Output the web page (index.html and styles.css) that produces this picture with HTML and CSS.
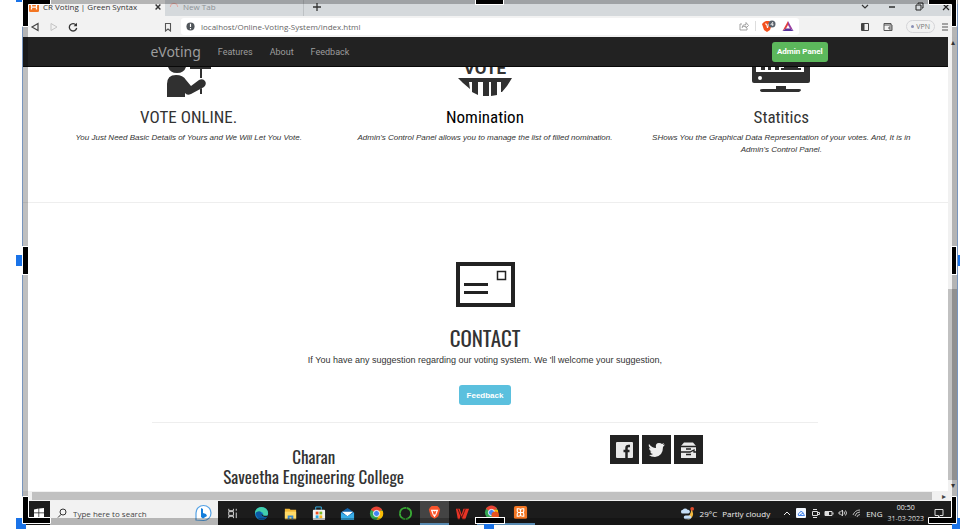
FILE: index.html
```html
<!DOCTYPE html>
<html lang="en">
<head>
<meta charset="utf-8">
<meta name="viewport" content="width=device-width, initial-scale=1">
<title>CR Voting | Green Syntax</title>
<link rel="stylesheet" href="styles.css">
</head>
<body>
<div class="screen">
  <div class="tabs">
    <div class="tab tab-active">
      <svg class="favicon" viewBox="0 0 16 16"><rect width="16" height="16" rx="2" fill="#f37623"/><path d="M4 4v3q0 1 2 1h4q2 0 2-1V4M4 12V9q0-1 2-1h4q2 0 2 1v3" fill="none" stroke="#fff" stroke-width="2"/></svg>
      <span>CR Voting | Green Syntax</span>
      <button class="icon-btn tab-close" aria-label="Close tab"><svg viewBox="0 0 10 10"><path d="M2 2l6 6M8 2L2 8" stroke="#333" stroke-width="1.8"/></svg></button>
    </div>
    <div class="tab tab-idle">
      <svg class="favicon" viewBox="0 0 16 16"><path d="M2 8a6 6 0 0 1 12 0" fill="none" stroke="#e8a39b" stroke-width="1.5"/></svg>
      <span>New Tab</span>
    </div>
    <button class="icon-btn tab-new" aria-label="New tab"><svg viewBox="0 0 10 10"><path d="M5 1v8M1 5h8" stroke="#333" stroke-width="1.3"/></svg></button>
    <div class="window-btns">
      <button class="icon-btn" aria-label="Search tabs"><svg viewBox="0 0 10 10"><path d="M2 4l3 3 3-3" fill="none" stroke="#333" stroke-width="1.2"/></svg></button>
      <button class="icon-btn" aria-label="Minimize"><svg viewBox="0 0 10 10"><path d="M2 6h6" stroke="#222" stroke-width="1.4"/></svg></button>
      <button class="icon-btn" aria-label="Restore"><svg viewBox="0 0 10 10"><path d="M2 4h5v5H2zM4 3V2h5v5H8" fill="none" stroke="#222"/></svg></button>
      <button class="icon-btn" aria-label="Close"><svg viewBox="0 0 10 10"><path d="M2 3l6 6M8 3L2 9" stroke="#222" stroke-width="1.2"/></svg></button>
    </div>
  </div>

  <div class="toolbar">
    <div class="history">
      <button class="icon-btn" aria-label="Back"><svg viewBox="0 0 10 10"><path d="M8 1.500L2 5l6 3.500z" fill="none" stroke="#444" stroke-width="1.200"/></svg></button>
      <button class="icon-btn" aria-label="Forward"><svg viewBox="0 0 10 10"><path d="M2 1.500L8 5 2 8.500z" fill="none" stroke="#c4c4c4"/></svg></button>
      <button class="icon-btn" aria-label="Reload"><svg viewBox="0 0 10 10"><path d="M8 3A3.700 3.700 0 1 0 8.700 6" fill="none" stroke="#333" stroke-width="1.300"/><path d="M9 .8v3.400H5.600z" fill="#333"/></svg></button>
    </div>
    <button class="icon-btn bookmark" aria-label="Bookmark"><svg viewBox="0 0 10 10"><path d="M2.500 1.500h5V9L5 7 2.500 9z" fill="none" stroke="#555" stroke-width="1.100"/></svg></button>
    <div class="address">
      <svg class="info" viewBox="0 0 10 10"><circle cx="5" cy="5" r="4.500" fill="#50555a"/><path d="M5 2v3.500M5 6.700V8" stroke="#fff" stroke-width="1.300"/></svg>
      <input type="text" value="localhost/Online-Voting-System/index.html" aria-label="Address">
      <button class="icon-btn" aria-label="Share"><svg viewBox="0 0 10 10"><path d="M3 3H1v6h7V7M3 6.500q0-3 4-3V1.500l2.500 3L7 7V5.200q-3 0-4 1.300z" fill="none" stroke="#999" stroke-width=".9"/></svg></button>
      <span class="divider"></span>
      <button class="icon-btn shield" aria-label="Shields"><svg viewBox="0 0 14 12"><path d="M2 2l2-1h3l2 1 1 2-2 6-3 2-3-2-2-6z" fill="#f4511e"/><path d="M3 4h1.500l1 4 1-4H8" fill="none" stroke="#fff"/><circle cx="10" cy="4" r="3.500" fill="#59616b"/><path d="M10.700 6V2.200L8.800 4.700h2.700" fill="none" stroke="#fff" stroke-width=".7"/></svg></button>
      <button class="icon-btn rewards" aria-label="Rewards"><svg viewBox="0 0 12 12"><path d="M6 1L.5 11 4 8.500 6 5z" fill="#e14040"/><path d="M6 1l5.500 10L8 8.500 6 5z" fill="#9b3fa0"/><path d="M.5 11L4 8.500h4l3.500 2.500z" fill="#57329b"/></svg></button>
    </div>
    <div class="tools">
      <button class="icon-btn" aria-label="Sidebar"><svg viewBox="0 0 10 10"><path d="M1.500 1.500h7v7h-7z" fill="none" stroke="#444"/><path d="M2 2h2.500v6H2z" fill="#444"/></svg></button>
      <button class="icon-btn" aria-label="Wallet"><svg viewBox="0 0 10 10"><path d="M8 3V1.500H1V8.500h8V3H1M9 5H6v2h3" fill="none" stroke="#555"/></svg></button>
      <button class="vpn"><i></i>VPN</button>
      <button class="icon-btn" aria-label="Menu"><svg viewBox="0 0 10 10"><path d="M2 2h6M2 5h6M2 8h6" stroke="#555" stroke-width="1.200"/></svg></button>
    </div>
  </div>

  <div class="viewport">
    <div class="page">
      <nav class="navbar">
        <div class="container nav-inner">
          <a class="brand" href="#">eVoting</a>
          <a href="#features">Features</a>
          <a href="#about">About</a>
          <a href="#feedback">Feedback</a>
          <button class="btn btn-admin">Admin Panel</button>
        </div>
      </nav>

      <section class="features" id="features">
        <article>
          <svg class="feature-icon" viewBox="0 0 60 30"><g fill="#303030"><path d="M9 0h18q-2 6-9 6T9 0z"/><path d="M8 30V17Q8 8 17 8q7 0 10 5l5 6 8-6q4-2 6 1t-1 6l-13 7q-4 2-6-1v4z"/><path d="M31 0h21v2H31z"/><path d="M41 2h2v9h-2zM41 22l2-1v6h-2z"/></g></svg>
          <h3>VOTE ONLINE.</h3>
          <p>You Just Need Basic Details of Yours and We Will Let You Vote.</p>
        </article>
        <article class="feature-mid">
          <svg class="feature-icon" viewBox="0 0 60 30"><text class="badge-word" x="30" y="7" text-anchor="middle">VOTE</text><path d="M3 11h54l-5 8-5 6h-1V15h-4v13l-6 1V15h-2v14h-6V15h-5v13l-6-3V15h-3l1 7-7-6z" fill="#303030"/></svg>
          <h3>Nomination</h3>
          <p>Admin's Control Panel allows you to manage the list of filled nomination.</p>
        </article>
        <article>
          <svg class="feature-icon" viewBox="0 0 60 30"><path d="M1 0h58v14q0 2-2 2H3q-2 0-2-2z" fill="#303030"/><path d="M5 0h48v5H5z" fill="#fff"/><path d="M10 0h4v3h-4zM17 0h3v3h-3zM24 0h4v3h-4zM30 1h20v2H30zM33 0h14v2H33z" fill="#303030"/><circle cx="9" cy="11" r="2" fill="#fff"/><path d="M25 19h10v3h13q2 0 2 1t-2 2H12q-3 0-3-2 0-1 3-1h13z" fill="#303030"/></svg>
          <h3>Statitics</h3>
          <p>SHows You the Graphical Data Representation of your votes. And, It is in Admin's Control Panel.</p>
        </article>
      </section>

      <section class="contact" id="feedback">
        <svg class="envelope" viewBox="0 0 59 45"><path d="M2 2h55v41H2z" fill="none" stroke="#222" stroke-width="4"/><path d="M8 22.500h24M8 30.500h24" stroke="#222" stroke-width="3"/><path d="M41.500 9.500h8v8h-8z" fill="none" stroke="#222" stroke-width="1.500"/></svg>
        <h2>CONTACT</h2>
        <p>If You have any suggestion regarding our voting system. We 'll welcome your suggestion,</p>
        <button class="btn btn-feedback">Feedback</button>
      </section>

      <hr class="container">
      <footer>
        <p>Charan<br>Saveetha Engineering College</p>
        <div class="social">
          <a href="#" aria-label="Facebook"><svg viewBox="0 0 29 29"><rect x="6" y="7" width="17" height="16" rx="1" fill="#e9e9e9"/><path d="M20 11h-1.500q-2 0-2 2V23M13.500 16h6" fill="none" stroke="#222" stroke-width="2.500"/></svg></a>
          <a href="#" aria-label="Twitter"><svg viewBox="0 0 29 29"><path d="M7 9q3 4 7 4-1-5 3-5 2 0 3 1l2-1-1 2 2-.5-2 2.500q0 9-8 10-4 0-6-2 3 0 4-1-2 0-3-2.500h1.500Q7 15.500 7 13l1.500.5Q6 11 7 9z" fill="#eee"/></svg></a>
          <a href="#" aria-label="Drawer"><svg viewBox="0 0 29 29"><path d="M7 11l3-3.500h9l3 3.500v12H7z" fill="#e9e9e9"/><path d="M7 11.500h15M7 17h9l4-2v2h2M12 14h5M12 19.500h5" fill="none" stroke="#222" stroke-width="1.300"/></svg></a>
        </div>
      </footer>
    </div>
    <div class="vscroll"><span class="arrow">▴</span><span class="vthumb"></span><span class="arrow">▾</span></div>
    <div class="hscroll"><span class="hthumb"></span><span class="arrow">▸</span></div>
  </div>

  <div class="taskbar">
    <button class="icon-btn start" aria-label="Start"><svg viewBox="0 0 12 12"><path d="M1 2.500l4.500-1v4H1zM6.200 1.400L11 1v4.500H6.200zM1 6.300h4.500v4.200L1 10zM6.200 6.300H11V11l-4.800-.5z" fill="#fff"/></svg></button>
    <div class="search">
      <svg viewBox="0 0 10 10"><circle cx="6" cy="4" r="3" fill="none" stroke="#333"/><path d="M4 6.500L1 9.500" stroke="#333"/></svg>
      <input type="text" placeholder="Type here to search" aria-label="Search">
      <svg class="bing" viewBox="0 0 18 18"><path d="M2 16V9a7.500 7.500 0 1 1 7.500 7.500z" fill="#fff" stroke="#55a2e5" stroke-width="1.200"/><path d="M7 4l2 1v4l3 1 1 2-4 2.500L7 13z" fill="#147edc"/></svg>
    </div>
    <div class="apps">
      <button class="icon-btn" aria-label="Task view"><svg viewBox="0 0 16 16"><path d="M4 3v2h5V3M4 13v-2h5v2M4 6h5v4H4zM12 3v2M12 7v6" fill="none" stroke="#ddd"/></svg></button>
      <button class="icon-btn" aria-label="Edge"><svg viewBox="0 0 16 16"><circle cx="8" cy="8" r="7" fill="#1685cc"/><path d="M1 8a7 7 0 0 1 14 0q0 3-4 3H9q2-2 0-4T1 8z" fill="#43cfaa"/><path d="M2 7q5-3 6 1-2 4 6 4-4 4-8 2T2 7z" fill="#0c59a4"/><path d="M8 8q-1 4 6 4l1-2q-2 1-5 0z" fill="#18212b"/></svg></button>
      <button class="icon-btn" aria-label="Explorer"><svg viewBox="0 0 16 16"><path d="M2 3h5l1 1h6v10H2z" fill="#f3b937"/><path d="M2 6h12v8H2z" fill="#ffda68"/><path d="M5 14v-4h6v4H9v-2H7v2z" fill="#3889d2"/></svg></button>
      <button class="icon-btn" aria-label="Store"><svg viewBox="0 0 16 16"><path d="M5 4V1h6v3" fill="none" stroke="#37b3e8"/><rect x="2" y="4" width="13" height="11" rx="1" fill="#f4f4f4"/><path d="M5 6h3v3H5z" fill="#ef5024"/><path d="M9 6h3v3H9z" fill="#7bb928"/><path d="M5 10h3v3H5z" fill="#26a8e8"/><path d="M9 10h3v3H9z" fill="#f8b81e"/></svg></button>
      <button class="icon-btn" aria-label="Mail"><svg viewBox="0 0 16 16"><path d="M1 7l7-5 7 5v8H1z" fill="#1263aa"/><path d="M2 6h12L8 11z" fill="#fff"/><path d="M1 7l7 4 7-4v8H1z" fill="#39aee9"/></svg></button>
      <button class="icon-btn" aria-label="Chrome"><svg viewBox="0 0 16 16"><circle cx="8" cy="8" r="7" fill="#34a853"/><path d="M8 8L2 4a7 7 0 0 1 12 0z" fill="#ea4335"/><path d="M8 5h6.500A7 7 0 0 1 8 15l3-6z" fill="#fbbc05"/><circle cx="8" cy="8" r="3.300" fill="#4285f4" stroke="#fff"/></svg></button>
      <button class="icon-btn" aria-label="Anaconda"><svg viewBox="0 0 16 16"><circle cx="8" cy="8" r="6" fill="none" stroke="#39a935" stroke-width="2" stroke-dasharray="9 .6"/></svg></button>
      <button class="icon-btn active" aria-label="Brave"><svg viewBox="0 0 16 16"><path d="M3 3l2-2h6l2 2 1 2-2 7-4 3-4-3-2-7z" fill="#fb542b"/><path d="M4 5h8l-2 5-2 3-2-3z" fill="#fff"/><path d="M6 6l2 1 2-1-1 4H7z" fill="#fb542b"/></svg></button>
      <button class="icon-btn" aria-label="WPS"><svg viewBox="0 0 16 16"><path d="M1 3h4l2 6 2-6h6l-4 11H8L6 9l-1 5H3z" fill="#e73426"/><path d="M3 3l4 10 4-10" fill="none" stroke="#5c1511"/></svg></button>
      <button class="icon-btn open" aria-label="Chrome profile"><svg viewBox="0 0 16 16"><circle cx="8" cy="8" r="7" fill="#34a853"/><path d="M8 8L2 4a7 7 0 0 1 12 0z" fill="#ea4335"/><path d="M8 5h6.500A7 7 0 0 1 8 15l3-6z" fill="#fbbc05"/><circle cx="8" cy="8" r="3.300" fill="#4285f4" stroke="#fff"/><circle cx="12" cy="11" r="4" fill="#e65321"/></svg></button>
      <button class="icon-btn open" aria-label="XAMPP"><svg viewBox="0 0 16 16"><rect x="1" y="1" width="14" height="14" rx="2" fill="#f37623"/><path d="M4.500 4v2.500Q4.500 8 6 8h4q1.500 0 1.500-1.500V4H10Q8 4 8 6v4q0 2 2 2h1.500V9.500Q11.500 8 10 8H6Q4.500 8 4.500 9.500V12H6q2 0 2-2V6q0-2-2-2z" fill="none" stroke="#fff" stroke-width="1.200"/></svg></button>
    </div>
    <div class="weather">
      <svg viewBox="0 0 16 16"><path d="M5 12q7 0 7-9 4 6 0 10-4 3-7-1z" fill="#f2b83f"/><circle cx="13" cy="3" r="2" fill="#de4c2d"/><path d="M3 8a2 2 0 0 1 0-4 3 3 0 0 1 5 0 2 2 0 0 1 1 4zM6 14a2 2 0 0 1 0-4h4a2 2 0 0 1 0 4z" fill="#c6def6"/></svg>
      <span>29°C</span><span>Partly cloudy</span>
    </div>
    <div class="tray">
      <svg viewBox="0 0 10 10"><path d="M2 7l3-3 3 3" fill="none" stroke="#eee"/></svg>
      <svg viewBox="0 0 10 10"><rect width="10" height="10" rx="1" fill="#f2f7ff"/><path d="M2.500 7.500q-1-2 1-2.500 1-3 3-1l2 3.500zM4 7l3-2" fill="none" stroke="#4383e8"/></svg>
      <svg viewBox="0 0 10 10"><path d="M2.500 3.500h5v4h-5zM3 1.500h4M3 9.500h4M8 4.500h1.500v2H8" fill="none" stroke="#ddd"/></svg>
      <svg viewBox="0 0 10 10"><path d="M1 3.500h7v4H1zM9 4.500v2" fill="none" stroke="#ddd"/><path d="M1 3h4v5H1z" fill="#ddd"/></svg>
      <svg viewBox="0 0 10 10"><path d="M1 4h1.500l2-2v6l-2-2H1zM6 3.500q1 1.500 0 3M7.500 2.500q2 2.500 0 5" fill="none" stroke="#ddd" stroke-width=".9"/></svg>
      <svg viewBox="0 0 10 10"><path d="M1 7q2-5 7-5M3 8q1-4 5-4M5 9q0-2 3-2.500" fill="none" stroke="#bbb"/></svg>
      <span>ENG</span>
    </div>
    <div class="clock"><span>00:50</span><span>31-03-2023</span></div>
    <svg class="notice" viewBox="0 0 10 10"><path d="M1 1.500h8v6H6L4.500 9V7.500H1z" fill="none" stroke="#ddd"/></svg>
  </div>

  <div class="shade shade-top"></div>
  <div class="shade shade-left"></div>
  <div class="shade shade-right"></div>
  <div class="shade shade-bottom"></div>
</div>
<div class="crop">
  <i class="dot dot-tl"></i><i class="dot dot-l"></i><i class="dot dot-r"></i><i class="dot dot-bl"></i><i class="dot dot-b"></i><i class="dot dot-br"></i>
  <svg class="corner corner-tl" viewBox="0 0 29 28"><path d="M.5-1.500h28v6h-22v22h-6z" fill="#000" stroke="#fff"/></svg>
  <svg class="corner corner-tr" viewBox="0 0 29 28"><path d="M.5-1.500h28v28h-5v-22h-23z" fill="#000" stroke="#fff"/></svg>
  <svg class="corner corner-bl" viewBox="0 0 29 28"><path d="M.5.5h6v21h22v6H.5z" fill="#000" stroke="#fff"/></svg>
  <svg class="corner corner-br" viewBox="0 0 29 28"><path d="M23.500.5h5v27H.5v-6h23z" fill="#000" stroke="#fff"/></svg>
  <i class="bar bar-t"></i><i class="bar bar-b"></i><i class="bar bar-l"></i><i class="bar bar-r"></i>
</div>
</body>
</html>
```

FILE: styles.css
```css
* { box-sizing: border-box; }
body {
  margin: 0;
  height: 100vh;
  padding: 0 2px 6px 22px;
  position: relative;
  overflow: hidden;
  background: #fff;
  font-family: Roboto, "Liberation Sans", sans-serif;
  font-size: 9px;
  color: #333;
}
button, input { font: inherit; border: 0; padding: 0; margin: 0; background: none; color: inherit; }
h2, h3, p { margin: 0; font-weight: 400; }
a { color: inherit; text-decoration: none; }
svg { display: block; flex: none; }

.screen { position: relative; height: 100%; display: flex; flex-direction: column; }
.icon-btn { display: grid; place-items: center; flex: none; }
.icon-btn svg { width: 10px; height: 10px; }

/* Browser tabs */
.tabs { display: flex; align-items: flex-start; height: 16px; background: #d5d9dc; font: 8px/13px "Open Sans", "Noto Sans", sans-serif; }
.tab { display: flex; align-items: center; gap: 4px; height: 16px; padding: 0 3px 3px 7px; }
.tab-active { width: 143px; background: #f2f2f2; color: #333; }
.tab-idle { width: 139px; padding-left: 4px; border-right: 1px solid #bdc1c4; color: #8c9195; }
.favicon { width: 10px; height: 10px; }
.tab-close { margin-left: auto; }
.tab-close svg { width: 8px; height: 8px; }
.tab-new { width: 26px; height: 13px; }
.window-btns { display: flex; gap: 17px; margin-left: auto; padding: 1px 7px 0 0; }

/* Address row */
.toolbar { display: flex; align-items: center; height: 21px; background: #f2f2f2; font-family: "Open Sans", "Noto Sans", sans-serif; font-size: 8px; }
.history { display: flex; gap: 9px; padding-left: 8px; }
.bookmark { margin: 0 8px 0 85px; }
.address { display: flex; align-items: center; flex: 1; height: 17px; margin-bottom: 1px; padding: 0 5px; gap: 6px; background: #fff; border-radius: 3px; }
.address input { flex: 1; min-width: 0; color: #666; font-size: 8px; }
.info { width: 9px; height: 9px; }
.divider { width: 1px; height: 10px; background: #ddd; }
.shield svg { width: 14px; height: 12px; }
.rewards svg { width: 12px; height: 12px; }
.tools { display: flex; align-items: center; gap: 13px; padding: 0 8px 0 61px; }
.vpn { display: flex; align-items: center; gap: 2px; height: 13px; padding: 0 4px; border: 1px solid #d5d5d8; border-radius: 7px; color: #777; font-size: 7px; }
.vpn i { width: 3px; height: 3px; border-radius: 50%; background: #8a8fb5; }
.tools .vpn + .icon-btn { margin-left: -8px; }

/* Visible area with its scroll bars */
.viewport { flex: 1; min-height: 0; display: grid; grid-template: minmax(0, 1fr) 10px / minmax(0, 1fr) 10px; background: #f1f1f1; }
.page { overflow: hidden; background: #fff; }
.vscroll { display: flex; flex-direction: column; align-items: center; }
.vthumb { flex: none; width: 100%; height: 42%; margin-top: auto; background: #c1c1c1; }
.hscroll { display: flex; align-items: center; }
.hthumb { flex: 1; height: 8px; margin: 0 10px; background: #c1c1c1; }
.arrow { font: 8px/11px "DejaVu Sans", sans-serif; color: #444; }
.hscroll .arrow { margin-right: 2px; }

.container { width: 72%; margin-inline: auto; }
.navbar { background: #222; border-bottom: 1px solid #080808; color: #9d9d9d; }
.container.nav-inner { display: flex; align-items: center; gap: 17px; width: 74%; height: 29px; padding-left: 8px; }
.brand { font: 14px/20px "Noto Sans", sans-serif; }
.btn { border-radius: 3px; color: #fff; font-weight: 700; text-align: center; height: 20px; }
.btn-admin { margin-left: auto; padding: 0 5px; background: #5cb85c; font-size: 8px; }

.features { display: grid; grid-template-columns: repeat(3, 1fr); width: 96%; margin: 0 auto; min-height: 135px; }
.features article { display: flex; flex-direction: column; align-items: center; text-align: center; }
.feature-icon { width: 60px; height: 30px; }
.badge-word { font: 700 17px Roboto, sans-serif; fill: #333; }
.features h3 { margin-top: 10px; font: 17px/20px "Roboto Condensed", "Liberation Sans Narrow", Roboto, sans-serif; }
.features p { margin-top: 5px; padding: 0 14px; font: italic 8px/12px "Liberation Sans", Arial, sans-serif; }
.feature-mid h3 { color: #000; }

.contact { display: flex; flex-direction: column; align-items: center; padding-top: 59px; border-top: 1px solid #eee; text-align: center; }
.envelope { width: 59px; height: 45px; }
.contact h2 { margin-top: 15px; font: 21px/32px Oswald, "Liberation Sans Narrow", "Roboto Condensed", sans-serif; }
.contact p { font: 9px/12px "Liberation Sans", Arial, sans-serif; }
.btn-feedback { margin-top: 19px; padding: 0 8px; background: #5bc0de; font-size: 8px; font-family: "Liberation Sans", Arial, sans-serif; }
hr { margin-block: 17px 0; border: 0; border-top: 1px solid #eee; }
footer { display: grid; grid-template-columns: 1fr 1fr; justify-items: center; width: 74%; margin: 12px auto 0; }
footer p { padding-top: 12px; text-align: center; font: 17px/20px Oswald, "Liberation Sans Narrow", "Roboto Condensed", sans-serif; }
.social { display: flex; gap: 3px; }
.social a { width: 29px; height: 29px; background: #222; }

/* Taskbar */
.taskbar { display: flex; align-items: center; height: 24px; padding-left: 6px; background: #1c1c1c; color: #eee; font: 8px/11px "Open Sans", "Noto Sans", sans-serif; }
.start { width: 22px; }
.start svg { width: 12px; height: 12px; }
.search { display: flex; align-items: center; gap: 6px; width: 168px; height: 24px; padding: 0 6px 0 7px; background: #f2f2f2; }
.search > svg { width: 10px; height: 10px; }
.search .bing { width: 18px; height: 18px; }
.search input { flex: 1; min-width: 0; font-size: 8px; color: #444; }
.search input::placeholder { color: #444; opacity: 1; }
.apps { display: grid; grid-template-columns: repeat(11, 1fr); width: 317px; height: 24px; }
.apps svg { width: 15px; height: 15px; }
.apps .active { background: #444; }
.apps .active, .apps .open { border-bottom: 2px solid #76b9ed; }
.weather { display: flex; align-items: center; gap: 5px; margin-left: auto; }
.weather svg { width: 15px; height: 15px; }
.tray { display: flex; align-items: center; gap: 4px; margin: 0 5px 0 12px; }
.tray svg, .notice { width: 10px; height: 10px; }
.clock { display: flex; flex-direction: column; align-items: center; margin-right: 10px; font-size: 7px; }
.notice { margin-right: 14px; }

/* Crop frame laid over the screen */
.shade { position: absolute; background: rgba(0, 0, 0, .25); pointer-events: none; }
.shade-top { inset: 0 0 auto; height: 4px; }
.shade-left { inset: 4px auto 7px 0; width: 6px; border-left: 1px solid #7895bd; }
.shade-right { inset: 4px 0 7px auto; width: 6px; border-right: 1px solid #7895bd; }
.shade-bottom { inset: auto 0 0; height: 7px; }
.crop { position: absolute; inset: 0; pointer-events: none; }
.dot, .bar, .corner { position: absolute; }
.dot { width: 6px; height: 11px; background: #1a73e8; }
.dot-tl { left: 16px; top: 0; height: 2px; }
.dot-l { left: 16px; top: 48%; }
.dot-r { right: 0; top: 48%; width: 2px; }
.dot-bl { left: 16px; bottom: 2px; width: 10px; }
.dot-b { left: 484px; bottom: 2px; width: 10px; height: 6px; }
.dot-br { right: 0; bottom: 2px; width: 8px; }
.corner { width: 29px; height: 28px; }
.corner-tl { left: 22px; top: 0; }
.corner-tr { right: 3px; top: 0; }
.corner-bl { left: 22px; bottom: 7px; }
.corner-br { right: 3px; bottom: 7px; }
.bar { background: #000; border: 1px solid #fff; }
.bar-t { left: 475px; top: -1px; width: 29px; height: 6px; }
.bar-b { left: 475px; bottom: 7px; width: 30px; height: 7px; }
.bar-l { left: 22px; top: 246px; width: 7px; height: 29px; }
.bar-r { right: 3px; top: 246px; width: 6px; height: 29px; }
```
